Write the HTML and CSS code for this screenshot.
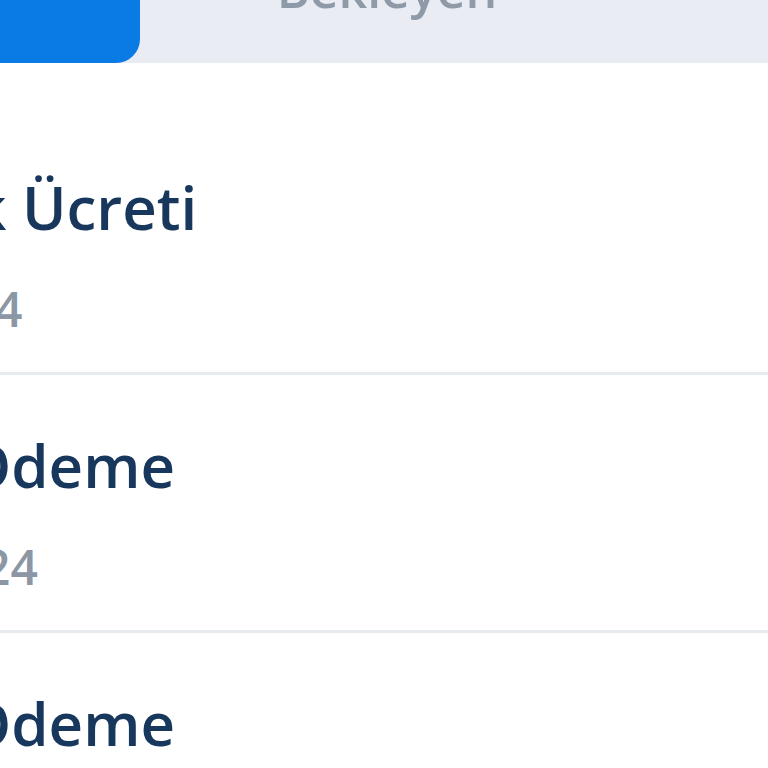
FILE: index.html
```html
<!DOCTYPE html>
<html lang="tr">
<head>
<meta charset="utf-8">
<link rel="stylesheet" href="styles.css">
</head>
<body>
<div class="tabs">
  <div class="tab tab-active"></div>
  <div class="tab tab-idle"><span class="tab-label">Bekleyen</span></div>
</div>
<div class="list">
  <div class="row">
    <div class="title shift-a">k Ücreti</div>
    <div class="date shift-c">4</div>
  </div>
  <div class="row">
    <div class="title shift-b">Ödeme</div>
    <div class="date shift-d">24</div>
  </div>
  <div class="row">
    <div class="title shift-b">Ödeme</div>
    <div class="date shift-d">24</div>
  </div>
</div>
</body>
</html>
```
FILE: styles.css
```css
html, body {
  margin: 0;
  padding: 0;
  background: #ffffff;
  overflow: hidden;
}
body {
  width: 768px;
  height: 768px;
  font-family: "Open Sans", "Noto Sans", sans-serif;
}
.tabs {
  display: flex;
  height: 63px;
  background: #e9edf3;
}
.tab-active {
  width: 140px;
  background: #0a7ae4;
  border-bottom-right-radius: 24px;
}
.tab-idle {
  width: 494px;
  display: flex;
  justify-content: center;
  align-items: flex-start;
  overflow: hidden;
}
.tab-label {
  font-size: 50px;
  line-height: 50px;
  font-weight: 600;
  color: #8e9aa7;
  margin-top: -36px;
}
.list {
  padding-top: 54px;
}
.row {
  padding: 54px 0 34px;
  border-bottom: 3px solid #e7eaee;
  display: flex;
  flex-direction: column;
  gap: 37px;
  white-space: nowrap;
}
.title {
  font-size: 60px;
  line-height: 72px;
  font-weight: 600;
  color: #17375d;
}
.date {
  font-size: 48px;
  line-height: 58px;
  font-weight: 600;
  color: #8b97a4;
}
.shift-a { margin-left: -28px; }
.shift-b { margin-left: -36px; }
.shift-c { margin-left: -5px; }
.shift-d { margin-left: -17px; }
```
